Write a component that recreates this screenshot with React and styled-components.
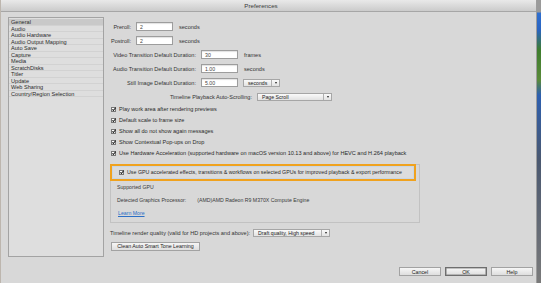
import React from 'react';
import styled, { createGlobalStyle } from 'styled-components';

const Global = createGlobalStyle`
  html, body { margin: 0; padding: 0; background: #d8d8d8; }
  body { font-family: "Liberation Sans", Arial, sans-serif; color: #222; }
  * { box-sizing: border-box; }
`;

const Screen = styled.div`
  width: 541px;
  height: 283px;
  display: flex;
  overflow: hidden;
`;

const Window = styled.div`
  width: 537px;
  height: 283px;
  display: flex;
  flex-direction: column;
  background: #d8d8d8;
  border-left: 1px solid #bdb6ae;
  border-right: 1px solid #9c9c9c;
`;

const Desktop = styled.div`
  flex: 1;
  background: linear-gradient(#9a9a9a 0, #9a9a9a 12px, #2f6fd0 13px, #2a64c0 30px, #3e7d2e 50px, #5a8a3a 80px, #2d5fb0 95px, #4a5870 160px, #7a7a7a 283px);
`;

const TitleBar = styled.div`
  height: 12px;
  flex: none;
  background: linear-gradient(#e9e9e9, #cbcbcb);
  border-bottom: 1px solid #a6a6a6;
  display: flex;
  align-items: center;
  justify-content: center;
  font-size: 6.2px;
  color: #3a3a3a;
  padding-right: 15px;
`;

const Content = styled.div`
  flex: 1;
  display: flex;
  flex-direction: column;
  padding: 5px 3px 0 7px;
`;

const Columns = styled.div`
  display: flex;
  gap: 6px;
`;

const Sidebar = styled.ul`
  width: 96px;
  height: 240px;
  flex: none;
  margin: 0;
  padding: 1px 0 0;
  list-style: none;
  background: #dedede;
  border: 1px solid #a3a3a3;
`;

const SideItem = styled.li`
  height: 6.5px;
  line-height: 6.5px;
  font-size: 5.6px;
  padding-left: 2px;
  white-space: nowrap;
  color: #2a2a2a;
  background: ${p => (p.$active ? '#c9c9c9' : 'transparent')};
  border-bottom: 0.5px solid #d2d2d2;
`;

const Panel = styled.div`
  flex: 1;
  display: flex;
  flex-direction: column;
  font-size: 5.55px;
`;

const Fields = styled.div`
  display: flex;
  flex-direction: column;
  gap: 4px;
  padding-top: 4.5px;
`;

const FieldRow = styled.div`
  height: 10px;
  display: flex;
  align-items: center;
  gap: 5px;
`;

const Label = styled.span`
  width: ${p => p.$w}px;
  text-align: right;
  white-space: nowrap;
  color: #333;
`;

const Input = styled.div`
  width: 37px;
  height: 9px;
  background: #fff;
  border: 1px solid #9d9d9d;
  box-shadow: inset 0 1px 1px rgba(0,0,0,0.12);
  padding-left: 3px;
  display: flex;
  align-items: center;
  font-size: 5.2px;
  color: #444;
`;

const Unit = styled.span`
  margin-left: 1px;
  color: #333;
`;

const Select = styled.div`
  width: ${p => p.$w}px;
  height: 8px;
  display: flex;
  align-items: stretch;
  border: 1px solid #a6a6a6;
  background: linear-gradient(#fafafa, #e2e2e2);
  font-size: 5.2px;
  color: #222;
`;

const SelectText = styled.span`
  flex: 1;
  display: flex;
  align-items: center;
  padding-left: 4px;
  white-space: nowrap;
  border-right: 1px solid #b0b0b0;
`;

const SelectArrow = styled.span`
  width: 7px;
  display: flex;
  align-items: center;
  justify-content: center;
  &::after {
    content: '';
    border-left: 1.5px solid transparent;
    border-right: 1.5px solid transparent;
    border-top: 2px solid #222;
  }
`;

const Checks = styled.div`
  display: flex;
  flex-direction: column;
  padding-left: 1px;
  margin-top: 2px;
`;

const CheckRow = styled.label`
  height: 11px;
  display: flex;
  align-items: center;
  gap: 3px;
  white-space: nowrap;
  color: #2a2a2a;
  font-size: ${p => p.$size || 'inherit'};
`;

const Box = styled.span`
  width: 5px;
  height: 5px;
  flex: none;
  background: #fff;
  border: 0.6px solid #777;
  position: relative;
  &::after {
    content: '';
    position: absolute;
    left: 1.2px;
    top: -0.2px;
    width: 1.4px;
    height: 3px;
    border-right: 0.9px solid #222;
    border-bottom: 0.9px solid #222;
    transform: rotate(40deg);
  }
`;

const Group = styled.div`
  margin-top: 5px;
  width: 310px;
  height: 59px;
  border: 1px solid #c2c2c2;
  display: flex;
  flex-direction: column;
`;

const Highlight = styled.div`
  margin: -1px 0 0 -1px;
  width: 306px;
  height: 17px;
  border: 2px solid #f0a21e;
  box-shadow: inset 0 0 0 1px #c9d6e3;
  background: #dcdcdc;
  display: flex;
  align-items: center;
  padding-left: 7px;
`;

const GroupLine = styled.div`
  height: 13px;
  display: flex;
  align-items: center;
  padding-left: 6px;
  color: #3a3a3a;
  font-size: 5.2px;
  white-space: nowrap;
`;

const GpuValue = styled.span`
  margin-left: 11px;
`;

const LearnMore = styled.a`
  color: #2b6fc6;
  text-decoration: underline;
  margin-left: 1px;
`;

const QualityRow = styled.div`
  height: 18px;
  display: flex;
  align-items: center;
  gap: 3px;
  margin-top: 1px;
  color: #333;
  white-space: nowrap;
`;

const Button = styled.div`
  width: ${p => p.$w}px;
  height: 9px;
  display: flex;
  align-items: center;
  justify-content: center;
  border: 1px solid ${p => (p.$primary ? '#6e6e6e' : '#a2a2a2')};
  box-shadow: ${p => (p.$primary ? 'inset 0 0 0 0.6px #8a8a8a' : 'none')};
  background: linear-gradient(#f6f6f6, #dedede);
  font-size: 5.3px;
  color: #222;
  white-space: nowrap;
`;

const CleanWrap = styled.div`
  padding-left: 1px;
`;

const Footer = styled.div`
  display: flex;
  justify-content: flex-end;
  gap: 4px;
  margin-top: 10px;
`;

const sidebarItems = [
  'General', 'Audio', 'Audio Hardware', 'Audio Output Mapping', 'Auto Save',
  'Capture', 'Media', 'ScratchDisks', 'Titler', 'Update', 'Web Sharing',
  'Country/Region Selection',
];

const checks = [
  'Play work area after rendering previews',
  'Default scale to frame size',
  'Show all do not show again messages',
  'Show Contextual Pop-ups on Drop',
  'Use Hardware Acceleration (supported hardware on macOS version 10.13 and above) for HEVC and H.264 playback',
];

export default function App() {
  return (
    <Screen>
      <Global />
      <Window>
        <TitleBar>Preferences</TitleBar>
        <Content>
          <Columns>
            <Sidebar>
              {sidebarItems.map((s, i) => (
                <SideItem key={s} $active={i === 0}>{s}</SideItem>
              ))}
            </Sidebar>
            <Panel>
              <Fields>
                <FieldRow>
                  <Label $w={21}>Preroll:</Label>
                  <Input>2</Input>
                  <Unit>seconds</Unit>
                </FieldRow>
                <FieldRow>
                  <Label $w={21}>Postroll:</Label>
                  <Input>2</Input>
                  <Unit>seconds</Unit>
                </FieldRow>
                <FieldRow>
                  <Label $w={86}>Video Transition Default Duration:</Label>
                  <Input>30</Input>
                  <Unit>frames</Unit>
                </FieldRow>
                <FieldRow>
                  <Label $w={86}>Audio Transition Default Duration:</Label>
                  <Input>1.00</Input>
                  <Unit>seconds</Unit>
                </FieldRow>
                <FieldRow>
                  <Label $w={86}>Still Image Default Duration:</Label>
                  <Input>5.00</Input>
                  <Select $w={37}>
                    <SelectText>seconds</SelectText>
                    <SelectArrow />
                  </Select>
                </FieldRow>
                <FieldRow>
                  <Label $w={142}>Timeline Playback Auto-Scrolling:</Label>
                  <Select $w={75}>
                    <SelectText>Page Scroll</SelectText>
                    <SelectArrow />
                  </Select>
                </FieldRow>
              </Fields>
              <Checks>
                {checks.map(c => (
                  <CheckRow key={c}>
                    <Box />
                    {c}
                  </CheckRow>
                ))}
              </Checks>
              <Group>
                <Highlight>
                  <CheckRow $size="5.3px">
                    <Box />
                    Use GPU accelerated effects, transitions &amp; workflows on selected GPUs for improved playback &amp; export performance
                  </CheckRow>
                </Highlight>
                <GroupLine>Supported GPU</GroupLine>
                <GroupLine>
                  Detected Graphics Processor:
                  <GpuValue>(AMD)AMD Radeon R9 M370X Compute Engine</GpuValue>
                </GroupLine>
                <GroupLine>
                  <LearnMore>Learn More</LearnMore>
                </GroupLine>
              </Group>
              <QualityRow>
                Timeline render quality (valid for HD projects and above):
                <Select $w={77}>
                  <SelectText>Draft quality, High speed</SelectText>
                  <SelectArrow />
                </Select>
              </QualityRow>
              <CleanWrap>
                <Button $w={89}>Clean Auto Smart Tone Learning</Button>
              </CleanWrap>
            </Panel>
          </Columns>
          <Footer>
            <Button $w={42}>Cancel</Button>
            <Button $w={42} $primary>OK</Button>
            <Button $w={42}>Help</Button>
          </Footer>
        </Content>
      </Window>
      <Desktop />
    </Screen>
  );
}
